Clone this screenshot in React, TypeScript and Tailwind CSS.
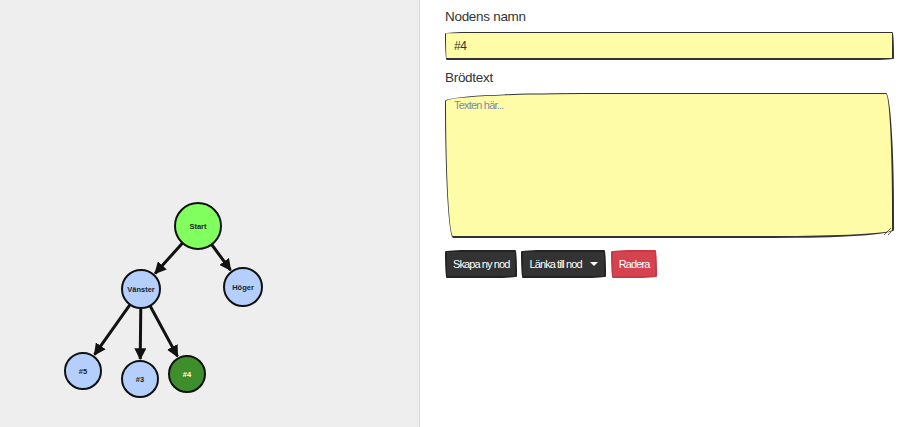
import React from 'react';

type Nod = { id: string; x: number; y: number; r: number; fill: string; text: string; label: string };

// Noderna i grafen, placerade på fri yta
const noder: Nod[] = [
  { id: 'start', x: 198, y: 226, r: 23, fill: '#80ff5e', text: '#222', label: 'Start' },
  { id: 'v', x: 141, y: 289, r: 19, fill: '#b4cffb', text: '#222', label: 'Vänster' },
  { id: 'h', x: 243, y: 287, r: 19, fill: '#b4cffb', text: '#222', label: 'Höger' },
  { id: 'n5', x: 83, y: 371, r: 18, fill: '#b4cffb', text: '#222', label: '#5' },
  { id: 'n3', x: 140, y: 379, r: 18, fill: '#b4cffb', text: '#222', label: '#3' },
  { id: 'n4', x: 187, y: 374, r: 18, fill: '#3f8e2c', text: '#fff', label: '#4' },
];

const kanter: [string, string][] = [
  ['start', 'v'],
  ['start', 'h'],
  ['v', 'n5'],
  ['v', 'n3'],
  ['v', 'n4'],
];

function Graf() {
  const hitta = (id: string) => noder.find((n) => n.id === id)!;
  return (
    <svg width="419" height="427" className="block">
      <defs>
        <marker id="pil" viewBox="0 0 10 10" refX="9" refY="5" markerWidth="4" markerHeight="4" orient="auto">
          <path d="M0 0 L10 5 L0 10 z" fill="#111" />
        </marker>
      </defs>
      {kanter.map(([a, b]) => {
        const f = hitta(a);
        const t = hitta(b);
        const dx = t.x - f.x;
        const dy = t.y - f.y;
        const d = Math.sqrt(dx * dx + dy * dy);
        const x1 = f.x + (dx / d) * f.r;
        const y1 = f.y + (dy / d) * f.r;
        const x2 = t.x - (dx / d) * (t.r + 2);
        const y2 = t.y - (dy / d) * (t.r + 2);
        return (
          <line key={a + b} x1={x1} y1={y1} x2={x2} y2={y2} stroke="#111" strokeWidth="3" markerEnd="url(#pil)" />
        );
      })}
      {noder.map((n) => (
        <g key={n.id}>
          <circle cx={n.x} cy={n.y} r={n.r} fill={n.fill} stroke="#111" strokeWidth="2" />
          <text
            x={n.x}
            y={n.y + 2.5}
            textAnchor="middle"
            fontSize="7.5"
            fontWeight="bold"
            fill={n.text}
            fontFamily="'Liberation Sans', Arial, sans-serif"
          >
            {n.label}
          </text>
        </g>
      ))}
    </svg>
  );
}

const skiss = 'rounded-[255px_15px_225px_15px/15px_225px_15px_255px]';
const knapp = `h-[28px] px-[6px] text-white text-[11px] tracking-[-0.9px] border-2 ${skiss}`;

export default function App() {
  return (
    <div className="flex w-[908px] h-[427px] bg-white font-['Liberation_Sans',Arial,sans-serif] text-[13.5px] text-[#333]">
      {/* Grafen */}
      <div className="w-[420px] h-full bg-[#eeeeee] border-r border-[#dddddd] shrink-0">
        <Graf />
      </div>

      {/* Redigering av nod */}
      <div className="flex-1 pl-[25px] pr-[14px] pt-[7px]">
        <label className="block leading-[19px] mb-[6px] tracking-[-0.3px]">Nodens namn</label>
        <input
          defaultValue="#4"
          className={`w-full h-[28px] px-[8px] bg-[#fffca8] border border-[#333] border-b-2 border-r-2 ${skiss} outline-none text-[12px] tracking-[-0.3px] text-[#333]`}
        />
        <label className="block leading-[19px] mt-[8px] mb-[6px] tracking-[-0.3px]">Brödtext</label>
        <textarea
          placeholder="Texten här..."
          className={`block w-full h-[145px] px-[8px] py-[3px] bg-[#fffca8] border border-[#333] border-b-2 border-r-2 ${skiss} outline-none text-[11px] tracking-[-0.8px] placeholder:text-[#7b8aa3]`}
        />
        <div className="flex gap-[4px] mt-[12px]">
          <button className={`${knapp} bg-[#333] border-[#222]`}>Skapa ny nod</button>
          <button className={`${knapp} bg-[#333] border-[#222] flex items-center gap-[8px]`}>
            Länka till nod
            <span className="w-0 h-0 border-l-[4px] border-r-[4px] border-t-[4px] border-l-transparent border-r-transparent border-t-white" />
          </button>
          <button className={`${knapp} ml-[1px] bg-[#d4434f] border-[#c63a46]`}>Radera</button>
        </div>
      </div>
    </div>
  );
}
